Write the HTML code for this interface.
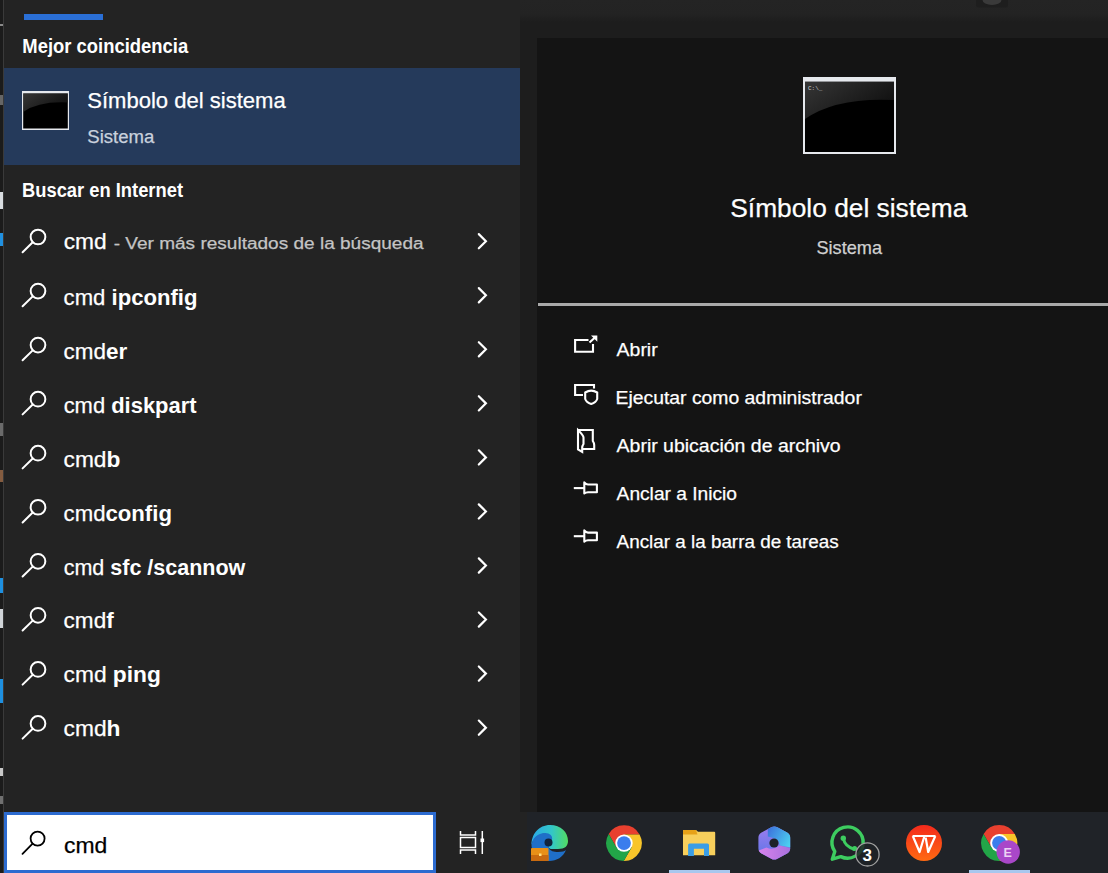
<!DOCTYPE html>
<html><head><meta charset="utf-8">
<style>
*{margin:0;padding:0;box-sizing:border-box}
html,body{width:1108px;height:873px;overflow:hidden;background:#232323;font-family:"Liberation Sans",sans-serif;}
.a{position:absolute;white-space:nowrap}
#edge{left:0;top:0;width:3px;height:873px;background:#1b1b1b}
#edgeline{left:3px;top:0;width:1px;height:873px;background:#3a3a3a}
#left{left:4px;top:0;width:516px;height:812px;background:#232323}
#rtop{left:520px;top:0;width:588px;height:22px;background:linear-gradient(#242424 0,#232323 14px,#1d1d1d 22px)}
#rout{left:520px;top:22px;width:588px;height:790px;background:#1d1d1d}
#rin{left:537px;top:38px;width:571px;height:774px;background:#141414}
#tab{left:24px;top:14px;width:79px;height:6px;background:#2a6fd6}
#hl{left:4px;top:68px;width:516px;height:97px;background:#253a5b}
#taskbar{left:527px;top:812px;width:581px;height:61px;background:#202328}
#sbox{left:4px;top:812px;width:432px;height:61px;background:#fff;border:3px solid #2c6bd0}
#sep{left:538px;top:303px;width:570px;height:3px;background:#a9a9a9}

</style></head><body>
<div class="a" id="edge"></div>
<div class="a" id="edgeline"></div>
<div class="a" style="left:0;top:24px;width:3px;height:2px;background:#8a8a8a"></div>
<div class="a" style="left:0;top:95px;width:3px;height:10px;background:#9a9a9a;opacity:.6"></div>
<div class="a" style="left:0;top:192px;width:3px;height:17px;background:#d8dce0"></div>
<div class="a" style="left:0;top:233px;width:3px;height:13px;background:#2090e0"></div>
<div class="a" style="left:0;top:423px;width:3px;height:13px;background:#bbbbbb;opacity:.5"></div>
<div class="a" style="left:0;top:470px;width:3px;height:12px;background:#b07850;opacity:.7"></div>
<div class="a" style="left:0;top:578px;width:3px;height:15px;background:#1e90e0"></div>
<div class="a" style="left:0;top:609px;width:3px;height:19px;background:#d0d4d8"></div>
<div class="a" style="left:0;top:679px;width:3px;height:24px;background:#1e90e0"></div>
<div class="a" style="left:0;top:768px;width:3px;height:8px;background:#c8c8c8"></div>
<div class="a" style="left:0;top:796px;width:3px;height:8px;background:#aaaaaa;opacity:.6"></div>
<div class="a" id="left"></div>
<div class="a" id="rtop"></div>
<div class="a" id="rout"></div>
<div class="a" id="rin"></div>
<div class="a" id="tab"></div>
<div class="a" id="hl"></div>
<div class="a" id="sep"></div>
<div class="a" id="taskbar"></div>
<div class="a" id="sbox"></div>
<div class="a" id="ind1" style="left:669px;top:870px;width:61px;height:3px;background:#a8c7ee"></div>
<div class="a" id="ind2" style="left:969px;top:870px;width:61px;height:3px;background:#a8c7ee"></div>

<svg class="a" width="1108" height="873" style="left:0;top:0">
<defs>
<linearGradient id="cmdg" x1="0" y1="0" x2="1" y2="0.6"><stop offset="0" stop-color="#5a5a5a"/><stop offset="1" stop-color="#1a1a1a"/></linearGradient>
<linearGradient id="edgeTop" x1="0" y1="0" x2="1" y2="0"><stop offset="0" stop-color="#2aa8e8"/><stop offset="0.55" stop-color="#33c6c8"/><stop offset="1" stop-color="#52dc62"/></linearGradient>
<linearGradient id="wps" x1="0" y1="0" x2="0" y2="1"><stop offset="0" stop-color="#f42a1c"/><stop offset="1" stop-color="#ff6a12"/></linearGradient>
<linearGradient id="m365l" x1="0" y1="0" x2="0" y2="1"><stop offset="0" stop-color="#a77ef0"/><stop offset="1" stop-color="#4f74e6"/></linearGradient>
<linearGradient id="m365t" x1="0" y1="0" x2="1" y2="0.5"><stop offset="0" stop-color="#3a62d8"/><stop offset="1" stop-color="#4fe0f4"/></linearGradient>
<linearGradient id="m365b" x1="0" y1="0" x2="1" y2="0"><stop offset="0" stop-color="#e588f0"/><stop offset="1" stop-color="#9a6ad8"/></linearGradient>
</defs>
<path d="M976 0 V5 Q976 7.5 979 7.5 H1005 Q1008 7.5 1008 5 V0 Z" fill="#1e1e1e"/>
<ellipse cx="992" cy="0" rx="9.5" ry="5" fill="#3a3a3a"/>
<rect x="22" y="91" width="47" height="39" fill="#e6e9ee"/>
<rect x="23.2" y="93.4" width="44.6" height="35.1" fill="#000"/>
<path d="M23.2 93.4 H67.8 V102.526 Q38.81 101.122 23.2 112.003 Z" fill="url(#cmdg)" opacity="0.6"/>
<rect x="803" y="77" width="93" height="77" fill="#e6e9ee"/>
<rect x="805" y="81.7" width="89" height="70.3" fill="#000"/>
<path d="M805 81.7 H894 V99.978 Q836.15 97.166 805 118.959 Z" fill="url(#cmdg)" opacity="0.6"/>
<text x="808" y="90" font-family="Liberation Mono" font-size="6" fill="#d0d0d0">C:\_</text>
<circle cx="38.00" cy="237.00" r="7.35" fill="none" stroke="#fff" stroke-width="2"/>
<line x1="32.70" y1="242.30" x2="22.60" y2="252.20" stroke="#fff" stroke-width="2" stroke-linecap="round"/>
<polyline points="478.8,234.10 485.9,241.20 478.8,248.30" fill="none" stroke="#fff" stroke-width="2.2" stroke-linecap="round"/>
<circle cx="38.00" cy="291.05" r="7.35" fill="none" stroke="#fff" stroke-width="2"/>
<line x1="32.70" y1="296.35" x2="22.60" y2="306.25" stroke="#fff" stroke-width="2" stroke-linecap="round"/>
<polyline points="478.8,288.15 485.9,295.25 478.8,302.35" fill="none" stroke="#fff" stroke-width="2.2" stroke-linecap="round"/>
<circle cx="38.00" cy="345.10" r="7.35" fill="none" stroke="#fff" stroke-width="2"/>
<line x1="32.70" y1="350.40" x2="22.60" y2="360.30" stroke="#fff" stroke-width="2" stroke-linecap="round"/>
<polyline points="478.8,342.20 485.9,349.30 478.8,356.40" fill="none" stroke="#fff" stroke-width="2.2" stroke-linecap="round"/>
<circle cx="38.00" cy="399.15" r="7.35" fill="none" stroke="#fff" stroke-width="2"/>
<line x1="32.70" y1="404.45" x2="22.60" y2="414.35" stroke="#fff" stroke-width="2" stroke-linecap="round"/>
<polyline points="478.8,396.25 485.9,403.35 478.8,410.45" fill="none" stroke="#fff" stroke-width="2.2" stroke-linecap="round"/>
<circle cx="38.00" cy="453.20" r="7.35" fill="none" stroke="#fff" stroke-width="2"/>
<line x1="32.70" y1="458.50" x2="22.60" y2="468.40" stroke="#fff" stroke-width="2" stroke-linecap="round"/>
<polyline points="478.8,450.30 485.9,457.40 478.8,464.50" fill="none" stroke="#fff" stroke-width="2.2" stroke-linecap="round"/>
<circle cx="38.00" cy="507.25" r="7.35" fill="none" stroke="#fff" stroke-width="2"/>
<line x1="32.70" y1="512.55" x2="22.60" y2="522.45" stroke="#fff" stroke-width="2" stroke-linecap="round"/>
<polyline points="478.8,504.35 485.9,511.45 478.8,518.55" fill="none" stroke="#fff" stroke-width="2.2" stroke-linecap="round"/>
<circle cx="38.00" cy="561.30" r="7.35" fill="none" stroke="#fff" stroke-width="2"/>
<line x1="32.70" y1="566.60" x2="22.60" y2="576.50" stroke="#fff" stroke-width="2" stroke-linecap="round"/>
<polyline points="478.8,558.40 485.9,565.50 478.8,572.60" fill="none" stroke="#fff" stroke-width="2.2" stroke-linecap="round"/>
<circle cx="38.00" cy="615.35" r="7.35" fill="none" stroke="#fff" stroke-width="2"/>
<line x1="32.70" y1="620.65" x2="22.60" y2="630.55" stroke="#fff" stroke-width="2" stroke-linecap="round"/>
<polyline points="478.8,612.45 485.9,619.55 478.8,626.65" fill="none" stroke="#fff" stroke-width="2.2" stroke-linecap="round"/>
<circle cx="38.00" cy="669.40" r="7.35" fill="none" stroke="#fff" stroke-width="2"/>
<line x1="32.70" y1="674.70" x2="22.60" y2="684.60" stroke="#fff" stroke-width="2" stroke-linecap="round"/>
<polyline points="478.8,666.50 485.9,673.60 478.8,680.70" fill="none" stroke="#fff" stroke-width="2.2" stroke-linecap="round"/>
<circle cx="38.00" cy="723.45" r="7.35" fill="none" stroke="#fff" stroke-width="2"/>
<line x1="32.70" y1="728.75" x2="22.60" y2="738.65" stroke="#fff" stroke-width="2" stroke-linecap="round"/>
<polyline points="478.8,720.55 485.9,727.65 478.8,734.75" fill="none" stroke="#fff" stroke-width="2.2" stroke-linecap="round"/>
<circle cx="37.6" cy="838.6" r="7" fill="none" stroke="#000" stroke-width="1.8"/>
<line x1="32.6" y1="843.6" x2="22.5" y2="853.8" stroke="#000" stroke-width="1.8" stroke-linecap="round"/>
<path d="M588.5 340 H575.1 V351.8 H593 V344" fill="none" stroke="#fff" stroke-width="2.1"/>
<path d="M589.5 342.5 L595 337.5" fill="none" stroke="#fff" stroke-width="2.1"/>
<path d="M591 335.6 H597.3 V341.8 Z" fill="#fff"/>
<path d="M583 395 H575.1 V385 H594 V388.6" fill="none" stroke="#fff" stroke-width="2.1"/>
<path d="M585.2 392.5 Q591.2 388.8 597.2 392.5 V399 Q596 402.5 591.2 404 Q586.4 402.5 585.2 399 Z" fill="none" stroke="#fff" stroke-width="2.1" stroke-width="2"/>
<path d="M578 430 H592.8 V441 Q594.2 443 594.2 445 V449 H582.5" fill="none" stroke="#fff" stroke-width="2.1" stroke-width="2"/>
<path d="M578 430 V449.5 L582.2 452 V447.5 Q582.3 445.8 583.5 444 V437.5 Q583.5 435.5 578 430 Z" fill="none" stroke="#fff" stroke-width="2.1" stroke-width="2"/>
<g transform="translate(0 0)"><path d="M573.8 488.1 H584" fill="none" stroke="#fff" stroke-width="2.1" stroke-width="1.7"/><path d="M584.3 482.3 Q586 484.4 588 484.5 H596.9 V492.2 H588 Q586 492.3 584.3 493.5 Z" fill="none" stroke="#fff" stroke-width="2.1" stroke-width="1.9" stroke-linejoin="round"/></g>
<g transform="translate(0 48.1)"><path d="M573.8 488.1 H584" fill="none" stroke="#fff" stroke-width="2.1" stroke-width="1.7"/><path d="M584.3 482.3 Q586 484.4 588 484.5 H596.9 V492.2 H588 Q586 492.3 584.3 493.5 Z" fill="none" stroke="#fff" stroke-width="2.1" stroke-width="1.9" stroke-linejoin="round"/></g>
<path d="M460.5 831 V835 H475.5 V831 M460.5 854 V850 H475.5 V854" fill="none" stroke="#fff" stroke-width="1.5"/>
<rect x="460.5" y="837.5" width="15" height="10" fill="none" stroke="#fff" stroke-width="1.5"/>
<path d="M482.3 831 V854" fill="none" stroke="#fff" stroke-width="1.5"/>
<rect x="480.5" y="838.5" width="3.6" height="3.6" fill="#fff"/>
<path d="M531.5 846 C531 834 539 825 550 825 C561 825 568 832 568 841 C568 846 565 849 558 849 L552 849 C549 849 548 847 548.5 845 C549 842 551 841 551 839 C551 835 546 833 542 834 C535 836 531.5 842 531.5 846 Z" fill="url(#edgeTop)"/>
<path d="M531.5 846 C532 838 538 833 545 833 C550 833 553 836 552 840 C551 843 548 845 549 848 C550 851 554 852 558 852 C562 852 565 851 566 850 C563 857 557 861 549 861 C539 861 532 855 531.5 846 Z" fill="#1f6fc8"/>
<circle cx="548.5" cy="842.5" r="4" fill="#12243c"/>
<rect x="531" y="848" width="17.5" height="13" rx="1" fill="#e89018"/>
<rect x="531" y="855" width="17.5" height="6" fill="#c86a10"/>
<rect x="539" y="853.5" width="2.5" height="2.5" fill="#ffe080"/>
<path d="M624.00 843.10 L616.47 847.45 L608.70 834.00 A17.8 17.8 0 0 1 639.53 834.40 L624.00 834.40 Z" fill="#e8402f"/>
<path d="M624.00 843.10 L624.00 834.40 L639.53 834.40 A17.8 17.8 0 0 1 623.77 860.90 L631.53 847.45 Z" fill="#f8c52a"/>
<path d="M624.00 843.10 L631.53 847.45 L623.77 860.90 A17.8 17.8 0 0 1 608.70 834.00 L616.47 847.45 Z" fill="#22a548"/>
<circle cx="624" cy="843.1" r="8.7" fill="#fff"/>
<circle cx="624" cy="843.1" r="6.9" fill="#3b7ded"/>
<path d="M683 831 Q683 830 684 830 H696 L698 831.8 H714.3 Q715.2 831.8 715.2 832.8 V855.2 H683 Z" fill="#f7cf5c"/>
<path d="M683 831 Q683 830 684 830 H696 L697.5 834.5 H683 Z" fill="#e6a118"/>
<path d="M688.1 856.1 V845 Q688.1 843.5 689.6 843.5 H707.5 Q709 843.5 709 845 V856.1 H704 V848.8 H693.9 V856.1 Z" fill="#3a9de6"/>
<clipPath id="hexc"><path d="M771.23 827.28 Q774.30 825.60 777.37 827.28 L787.13 832.62 Q790.20 834.30 790.20 837.80 L790.20 848.20 Q790.20 851.70 787.13 853.38 L777.37 858.72 Q774.30 860.40 771.23 858.72 L761.47 853.38 Q758.40 851.70 758.40 848.20 L758.40 837.80 Q758.40 834.30 761.47 832.62 Z"/></clipPath>
<g clip-path="url(#hexc)">
<rect x="755" y="822" width="40" height="42" fill="url(#m365l)"/>
<path d="M767.8 820 H800 V849 L780 845.5 Q779 838.5 771.5 837.5 L767.8 836.5 Z" fill="url(#m365t)"/>
<path d="M750 854 L766.5 847.5 Q773 851 779.5 845.5 L800 850.5 V870 H750 Z" fill="url(#m365b)"/>
<circle cx="774" cy="843" r="4.6" fill="#1e2228"/>
</g>
<path d="M832.3 859.2 L834.8 851.5 A15.6 15.6 0 1 1 840.8 856.6 Z" fill="none" stroke="#3dcd60" stroke-width="3.4" stroke-linejoin="round"/>
<path d="M843.4 838.8 Q845 846.5 854.2 849.3" fill="none" stroke="#3dcd60" stroke-width="3"/>
<circle cx="843.3" cy="838.2" r="2.7" fill="#3dcd60"/>
<circle cx="854.6" cy="848.6" r="2.5" fill="#3dcd60"/>
<circle cx="867.5" cy="854.4" r="11.6" fill="#1f2226" fill-opacity="0.85" stroke="#a0a0a0" stroke-width="1.3"/>
<text x="867.3" y="861" font-family="Liberation Sans" font-weight="bold" font-size="17" fill="#fff" text-anchor="middle">3</text>
<circle cx="924" cy="843" r="18" fill="url(#wps)"/>
<path d="M912.6 836 H935.5 M912.8 836 L919.6 852 L924.3 836.5 M925.7 837.6 L928.2 852 L935.3 836" fill="none" stroke="#fff" stroke-width="2.2" stroke-linejoin="round"/>
<path d="M999.20 843.00 L991.41 847.50 L983.61 834.00 A18 18 0 0 1 1014.79 834.00 L999.20 834.00 Z" fill="#e8402f"/>
<path d="M999.20 843.00 L999.20 834.00 L1014.79 834.00 A18 18 0 0 1 999.20 861.00 L1006.99 847.50 Z" fill="#f8c52a"/>
<path d="M999.20 843.00 L1006.99 847.50 L999.20 861.00 A18 18 0 0 1 983.61 834.00 L991.41 847.50 Z" fill="#22a548"/>
<circle cx="999.2" cy="843" r="9" fill="#fff"/>
<circle cx="999.2" cy="843" r="7.1" fill="#3b7ded"/>
<circle cx="1008.2" cy="852" r="11.7" fill="#a947c9"/>
<text x="1007.6" y="856.6" font-family="Liberation Sans" font-weight="bold" font-size="12.5" fill="#ecd2f4" text-anchor="middle">E</text>
</svg>
<svg class="a" width="1108" height="873" style="left:0;top:0;font-family:'Liberation Sans',sans-serif">
<text x="22.34" y="52.50" font-size="19.30" fill="#ffffff" textLength="165.87" lengthAdjust="spacingAndGlyphs"><tspan font-weight="bold">Mejor coincidencia</tspan></text>
<text x="87.28" y="107.80" font-size="21.70" fill="#ffffff" textLength="198.49" lengthAdjust="spacingAndGlyphs"><tspan stroke="#ffffff" stroke-width="0.25">Símbolo del sistema</tspan></text>
<text x="87.31" y="142.50" font-size="18.80" fill="#c9d1dd" textLength="67.03" lengthAdjust="spacingAndGlyphs"><tspan stroke="#c9d1dd" stroke-width="0.25">Sistema</tspan></text>
<text x="22.06" y="196.70" font-size="19.50" fill="#ffffff" textLength="160.95" lengthAdjust="spacingAndGlyphs"><tspan font-weight="bold">Buscar en Internet</tspan></text>
<text x="63.69" y="248.70" font-size="22.60" fill="#ffffff" textLength="43.00" lengthAdjust="spacingAndGlyphs"><tspan stroke="#ffffff" stroke-width="0.25">cmd</tspan></text>
<text x="113.70" y="248.70" font-size="17.30" fill="#c4c4c4" textLength="309.93" lengthAdjust="spacingAndGlyphs"><tspan stroke="#c4c4c4" stroke-width="0.25">- Ver más resultados de la búsqueda</tspan></text>
<text x="63.62" y="304.90" font-size="22.60" fill="#ffffff" textLength="133.89" lengthAdjust="spacingAndGlyphs"><tspan stroke="#ffffff" stroke-width="0.25">cmd </tspan><tspan font-weight="bold">ipconfig</tspan></text>
<text x="63.61" y="358.83" font-size="22.60" fill="#ffffff" textLength="63.64" lengthAdjust="spacingAndGlyphs"><tspan stroke="#ffffff" stroke-width="0.25">cmd</tspan><tspan font-weight="bold">er</tspan></text>
<text x="63.63" y="412.76" font-size="22.60" fill="#ffffff" textLength="132.95" lengthAdjust="spacingAndGlyphs"><tspan stroke="#ffffff" stroke-width="0.25">cmd </tspan><tspan font-weight="bold">diskpart</tspan></text>
<text x="63.59" y="466.69" font-size="22.60" fill="#ffffff" textLength="56.81" lengthAdjust="spacingAndGlyphs"><tspan stroke="#ffffff" stroke-width="0.25">cmd</tspan><tspan font-weight="bold">b</tspan></text>
<text x="63.62" y="520.62" font-size="22.60" fill="#ffffff" textLength="108.32" lengthAdjust="spacingAndGlyphs"><tspan stroke="#ffffff" stroke-width="0.25">cmd</tspan><tspan font-weight="bold">config</tspan></text>
<text x="63.65" y="574.55" font-size="22.60" fill="#ffffff" textLength="181.72" lengthAdjust="spacingAndGlyphs"><tspan stroke="#ffffff" stroke-width="0.25">cmd </tspan><tspan font-weight="bold">sfc /scannow</tspan></text>
<text x="63.60" y="628.48" font-size="22.60" fill="#ffffff" textLength="50.12" lengthAdjust="spacingAndGlyphs"><tspan stroke="#ffffff" stroke-width="0.25">cmd</tspan><tspan font-weight="bold">f</tspan></text>
<text x="63.59" y="682.41" font-size="22.60" fill="#ffffff" textLength="97.27" lengthAdjust="spacingAndGlyphs"><tspan stroke="#ffffff" stroke-width="0.25">cmd </tspan><tspan font-weight="bold">ping</tspan></text>
<text x="63.59" y="736.34" font-size="22.60" fill="#ffffff" textLength="56.92" lengthAdjust="spacingAndGlyphs"><tspan stroke="#ffffff" stroke-width="0.25">cmd</tspan><tspan font-weight="bold">h</tspan></text>
<text x="730.29" y="217.40" font-size="26.00" fill="#ffffff" textLength="237.01" lengthAdjust="spacingAndGlyphs"><tspan stroke="#ffffff" stroke-width="0.25">Símbolo del sistema</tspan></text>
<text x="816.44" y="253.70" font-size="19.00" fill="#d0d0d0" textLength="65.61" lengthAdjust="spacingAndGlyphs"><tspan stroke="#d0d0d0" stroke-width="0.25">Sistema</tspan></text>
<text x="616.60" y="355.80" font-size="18.75" fill="#ffffff" textLength="41.08" lengthAdjust="spacingAndGlyphs"><tspan stroke="#ffffff" stroke-width="0.25">Abrir</tspan></text>
<text x="615.57" y="403.90" font-size="18.75" fill="#ffffff" textLength="246.28" lengthAdjust="spacingAndGlyphs"><tspan stroke="#ffffff" stroke-width="0.25">Ejecutar como administrador</tspan></text>
<text x="616.60" y="452.00" font-size="18.75" fill="#ffffff" textLength="224.08" lengthAdjust="spacingAndGlyphs"><tspan stroke="#ffffff" stroke-width="0.25">Abrir ubicación de archivo</tspan></text>
<text x="616.60" y="500.10" font-size="18.75" fill="#ffffff" textLength="120.38" lengthAdjust="spacingAndGlyphs"><tspan stroke="#ffffff" stroke-width="0.25">Anclar a Inicio</tspan></text>
<text x="616.60" y="548.20" font-size="18.75" fill="#ffffff" textLength="222.17" lengthAdjust="spacingAndGlyphs"><tspan stroke="#ffffff" stroke-width="0.25">Anclar a la barra de tareas</tspan></text>
<text x="63.95" y="852.50" font-size="21.80" fill="#000000" textLength="43.30" lengthAdjust="spacingAndGlyphs"><tspan stroke="#000000" stroke-width="0.25">cmd</tspan></text>
</svg>
</body></html>
